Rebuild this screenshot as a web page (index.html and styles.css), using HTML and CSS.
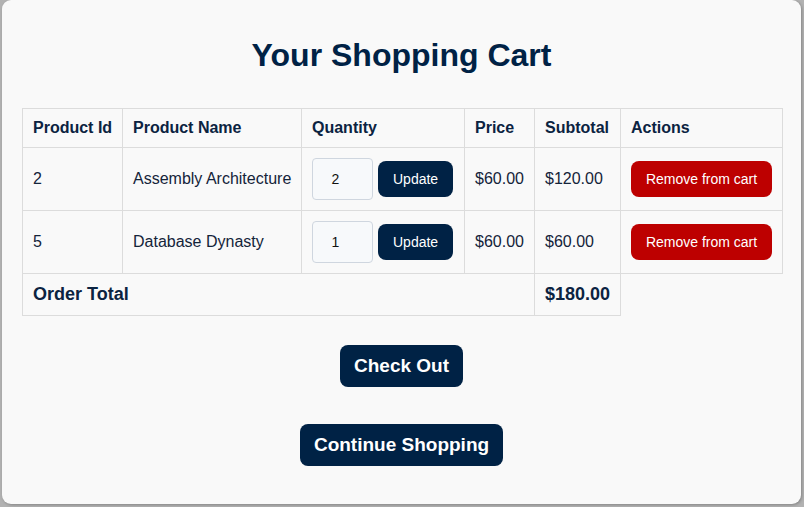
FILE: index.html
```html
<!DOCTYPE html>
<html>
<head>
<meta charset="utf-8">
<link rel="stylesheet" href="styles.css">
</head>
<body>
<div class="card">
  <h1 class="title">Your Shopping Cart</h1>
  <table class="cart">
    <colgroup>
      <col class="c1"><col class="c2"><col class="c3"><col class="c4"><col class="c5"><col class="c6">
    </colgroup>
    <thead>
      <tr>
        <th>Product Id</th>
        <th>Product Name</th>
        <th>Quantity</th>
        <th>Price</th>
        <th>Subtotal</th>
        <th>Actions</th>
      </tr>
    </thead>
    <tbody>
      <tr>
        <td>2</td>
        <td>Assembly Architecture</td>
        <td><div class="qty"><input class="qty-input" type="text" value="2"><button class="btn btn-small">Update</button></div></td>
        <td>$60.00</td>
        <td>$120.00</td>
        <td><button class="btn btn-small btn-red">Remove from cart</button></td>
      </tr>
      <tr>
        <td>5</td>
        <td>Database Dynasty</td>
        <td><div class="qty"><input class="qty-input" type="text" value="1"><button class="btn btn-small">Update</button></div></td>
        <td>$60.00</td>
        <td>$60.00</td>
        <td><button class="btn btn-small btn-red">Remove from cart</button></td>
      </tr>
      <tr class="total">
        <td colspan="4">Order Total</td>
        <td>$180.00</td>
        <td class="empty"></td>
      </tr>
    </tbody>
  </table>
  <div class="actions">
    <button class="btn btn-big">Check Out</button>
    <button class="btn btn-big">Continue Shopping</button>
  </div>
</div>
</body>
</html>
```
FILE: styles.css
```css
html, body {
  margin: 0;
  padding: 0;
}
body {
  background: #b2b2b2;
  width: 804px;
  height: 507px;
  overflow: hidden;
  font-family: "Liberation Sans", Arial, sans-serif;
  color: #0b2341;
}
.card {
  margin-left: 2px;
  width: 799px;
  height: 504px;
  box-sizing: border-box;
  background: #f9f9f9;
  border-radius: 9px;
  padding: 37px 20px 0 20px;
  box-shadow: 1px 1px 3px rgba(0,0,0,0.25);
}
.title {
  margin: 0 0 34px 0;
  text-align: center;
  font-size: 32px;
  line-height: 37px;
  font-weight: bold;
  color: #002245;
}
.cart {
  border-collapse: collapse;
  table-layout: fixed;
  width: 760px;
  font-size: 16px;
  line-height: 18px;
}
.c1 { width: 100px; }
.c2 { width: 179px; }
.c3 { width: 163px; }
.c4 { width: 70px; }
.c5 { width: 86px; }
.c6 { width: 162px; }
.cart th, .cart td {
  border: 1px solid #dcdcdc;
  padding: 10px;
  text-align: left;
  vertical-align: middle;
  white-space: nowrap;
}
.cart th {
  font-weight: bold;
}
.cart td {
  color: #14243a;
}
.total td {
  font-weight: bold;
  font-size: 18px;
  line-height: 21px;
  color: #0b2341;
}
.cart td.empty {
  border: none;
}
.qty {
  display: flex;
  align-items: center;
  gap: 5px;
}
.qty-input {
  width: 61px;
  height: 42px;
  box-sizing: border-box;
  border: 1px solid #cfd6df;
  border-radius: 4px;
  background: #f7f9fb;
  font-family: "Liberation Sans", Arial, sans-serif;
  font-size: 14px;
  color: #111;
  text-align: center;
  padding: 0 14px 0 0;
  margin: 0;
}
.btn {
  border: none;
  background: #002245;
  color: #fff;
  font-family: "Liberation Sans", Arial, sans-serif;
  border-radius: 8px;
  cursor: pointer;
  margin: 0;
}
.btn-small {
  font-size: 14px;
  line-height: 16px;
  padding: 10px 15px;
  height: 36px;
}
.btn-red {
  background: #bd0000;
  width: 141px;
  padding: 10px 0;
}
.actions {
  display: flex;
  flex-direction: column;
  align-items: center;
  gap: 37px;
  margin-top: 29px;
}
.btn-big {
  font-size: 19px;
  font-weight: bold;
  line-height: 22px;
  padding: 10px 14px;
  height: 42px;
}
```
